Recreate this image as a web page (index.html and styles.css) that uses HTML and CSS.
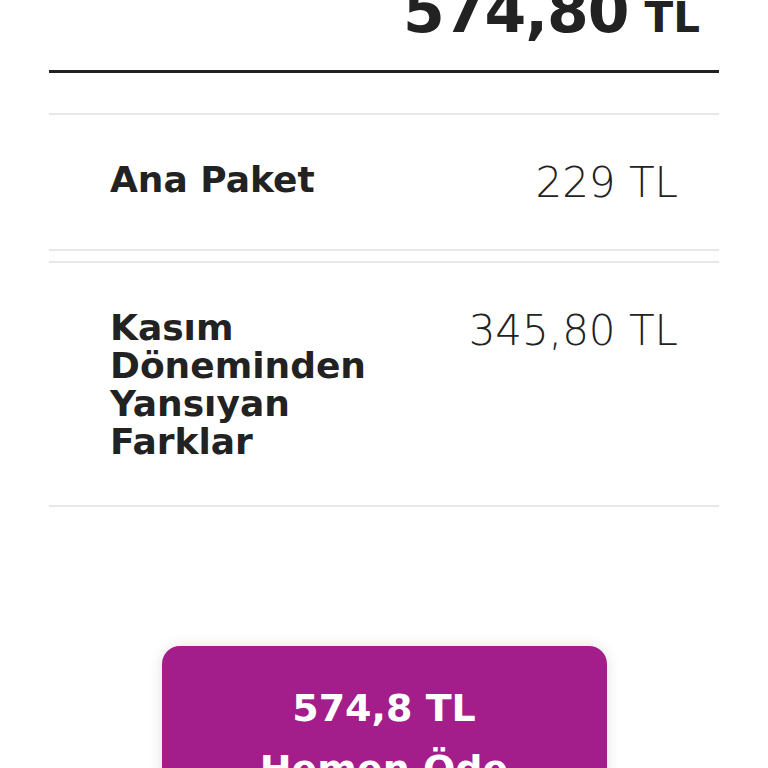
FILE: index.html
```html
<!DOCTYPE html>
<html lang="tr">
<head>
  <meta charset="UTF-8" />
  <meta name="viewport" content="width=device-width, initial-scale=1.0"/>
  <title>Fatura Detayı</title>
  <link rel="stylesheet" href="styles.css">
</head>
<body>
  <main class="bill">
    <!-- Toplam -->
    <div class="bill-total">
      <span class="total-amount">574,80</span>
      <span class="total-currency">TL</span>
    </div>

    <!-- Kalemler -->
    <section class="bill-items">
      <div class="bill-item">
        <h3 class="item-label">Ana Paket</h3>
        <span class="item-price">229 TL</span>
      </div>
      <div class="bill-item">
        <h3 class="item-label">Kasım Döneminden Yansıyan Farklar</h3>
        <span class="item-price">345,80 TL</span>
      </div>
    </section>

    <div class="pay-wrap">
      <button class="pay-button">
        <span class="pay-amount">574,8 TL</span>
        <span class="pay-text">Hemen Öde</span>
      </button>
    </div>
  </main>
</body>
</html>
```

FILE: styles.css
```css
body {
  margin: 0;
  background-color: #fff;
  color: #222;
  font-family: 'DejaVu Sans', 'Open Sans', sans-serif;
  overflow: hidden;
}

.bill {
  padding: 0 49px;
}

.bill-total {
  display: flex;
  justify-content: flex-end;
  align-items: baseline;
  gap: 16px;
  margin-top: -29px;
  padding-right: 19px;
  height: 102px;
  border-bottom: 3px solid #222;
  box-sizing: border-box;
}

.total-amount {
  font-size: 60px;
  font-weight: bold;
  letter-spacing: -1px;
  line-height: 80px;
}

.total-currency {
  font-size: 42px;
  font-weight: bold;
}

.bill-items {
  margin-top: 40px;
  display: flex;
  flex-direction: column;
  gap: 10px;
}

.bill-item {
  display: flex;
  justify-content: space-between;
  align-items: flex-start;
  border-top: 2px solid #e8e8e8;
  border-bottom: 2px solid #e8e8e8;
  padding: 46px 41px 44px 61px;
}

.item-label {
  margin: 0;
  max-width: 280px;
  font-size: 36px;
  line-height: 38px;
  font-weight: bold;
}

.item-price {
  font-size: 42px;
  font-weight: 200;
  line-height: 44px;
  white-space: nowrap;
}

.pay-wrap {
  display: flex;
  justify-content: center;
  margin-top: 139px;
}

.pay-button {
  width: 445px;
  height: 160px;
  border: none;
  border-radius: 18px;
  background-color: #a31d8b;
  color: #fff;
  font-family: inherit;
  font-weight: bold;
  display: flex;
  flex-direction: column;
  align-items: center;
  padding-top: 40px;
  gap: 17px;
  box-shadow: 0 0 14px rgba(0, 0, 0, 0.12);
}

.pay-amount {
  font-size: 38px;
}

.pay-text {
  font-size: 38px;
}
```
